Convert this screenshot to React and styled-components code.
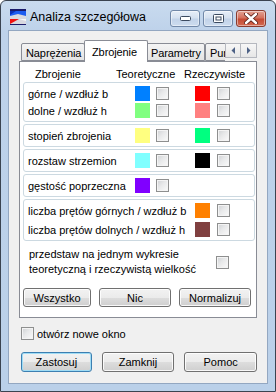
import React from 'react';
import styled, { createGlobalStyle } from 'styled-components';

const GlobalStyle = createGlobalStyle`
  html, body {
    margin: 0;
    padding: 0;
    background: #ffffff;
  }
  body {
    font-family: "Liberation Sans", Arial, sans-serif;
    font-size: 11px;
    color: #000;
  }
  * {
    box-sizing: border-box;
  }
`;

const Window = styled.div`
  width: 276px;
  height: 392px;
  display: flex;
  flex-direction: column;
  background: linear-gradient(#c9dbef 0px, #bed2ea 30px, #bad0e9 100%);
  border: 1px solid #3a4350;
  border-radius: 6px 6px 0 0;
  overflow: hidden;
`;

const TitleBar = styled.div`
  height: 29px;
  flex: 0 0 29px;
  display: flex;
  align-items: center;
  padding: 0 9px 0 9px;
`;

const AppIcon = styled.svg`
  width: 16px;
  height: 16px;
  flex: 0 0 16px;
  margin-top: 2px;
`;

const Title = styled.div`
  margin-left: 4px;
  font-family: "Liberation Sans", Arial, sans-serif;
  font-size: 12.5px;
  color: #000;
  flex: 1;
  padding-top: 2px;
`;

const CaptionButtons = styled.div`
  display: flex;
  gap: 3px;
  align-self: flex-start;
  margin-top: 9px;
`;

const CaptionButton = styled.div`
  width: ${(p) => p.$w}px;
  height: 17px;
  border-radius: 3px;
  display: flex;
  align-items: center;
  justify-content: center;
  border: 1px solid ${(p) => (p.$close ? '#8a3b2e' : '#7188a8')};
  background: ${(p) =>
    p.$close
      ? 'linear-gradient(#e3a394 0%, #d5715e 45%, #c44a33 55%, #d36a52 100%)'
      : 'linear-gradient(#e6eef8 0%, #d5e1f0 45%, #c2d3e9 55%, #cddcef 100%)'};
  box-shadow: inset 0 0 0 1px rgba(255, 255, 255, 0.45);
`;

const Client = styled.div`
  flex: 1;
  margin: 0 7px 8px;
  background: #f0f0f0;
  border: 1px solid #93a7c1;
  padding: 9px 10px 0;
  display: flex;
  flex-direction: column;
`;

const TabStrip = styled.div`
  display: flex;
  align-items: flex-end;
  height: 21px;
  padding-left: 2px;
  position: relative;
  z-index: 1;
`;

const Tab = styled.div`
  flex: 0 0 ${(p) => p.$w}px;
  width: ${(p) => p.$w}px;
  height: ${(p) => (p.$active ? 22 : 18)}px;
  margin: 0 ${(p) => (p.$active ? -2 : 0)}px ${(p) => (p.$active ? -1 : 0)}px ${(p) => (p.$active ? -1 : 0)}px;
  padding: ${(p) => (p.$active ? 0 : 1)}px 0 0 ${(p) => (p.$active ? 7 : 4)}px;
  display: flex;
  align-items: center;
  white-space: nowrap;
  border: 1px solid #898c95;
  border-bottom: ${(p) => (p.$active ? 'none' : '1px solid #898c95')};
  border-radius: 2px 2px 0 0;
  background: ${(p) => (p.$active ? '#ffffff' : 'linear-gradient(#f4f4f4, #e4e4e4)')};
  font-size: 11px;
  letter-spacing: -0.1px;
  position: relative;
  z-index: ${(p) => (p.$active ? 2 : 1)};
`;

const TabClip = styled.div`
  width: 20px;
  overflow: hidden;
  display: flex;
  align-items: flex-end;
`;

const ScrollButtons = styled.div`
  display: flex;
  margin-bottom: 3px;
`;

const ScrollButton = styled.div`
  width: 16px;
  height: 15px;
  display: flex;
  align-items: center;
  justify-content: center;
  border: 1px solid #b5b8bf;
  background: linear-gradient(#f7f7f7, #e6e6e6);
  & + & {
    border-left: none;
  }
`;

const Panel = styled.div`
  height: 257px;
  border: 1px solid #898c95;
  background: #ffffff;
  padding: 0 1px 10px 3px;
  display: flex;
  flex-direction: column;
`;

const HeaderRow = styled.div`
  display: flex;
  height: 20px;
  align-items: center;
  padding: 4px 0 0 12px;
`;

const HeaderCell = styled.div`
  width: ${(p) => p.$w}px;
`;

const Groups = styled.div`
  display: flex;
  flex-direction: column;
  gap: 2px;
`;

const Group = styled.div`
  border: 1px solid #ccd9e1;
  border-radius: 3px;
  padding: 3px 4px;
  display: grid;
  grid-template-columns: 107px 60px 35px;
  row-gap: ${(p) => p.$gap || 2}px;
`;

const Label = styled.div`
  grid-column: ${(p) => (p.$wide ? '1 / 3' : '1')};
  height: 15px;
  display: flex;
  align-items: center;
  white-space: nowrap;
`;

const Pair = styled.div`
  grid-column: ${(p) => p.$col};
  display: flex;
  align-items: center;
  gap: ${(p) => (p.$col === 3 ? 7 : 6)}px;
`;

const Swatch = styled.div`
  width: 15px;
  height: 15px;
  background: ${(p) => p.$color};
  visibility: ${(p) => (p.$color ? 'visible' : 'hidden')};
`;

const Check = styled.div`
  width: 13px;
  height: 13px;
  border: 1px solid #8e8f8f;
  background: linear-gradient(135deg, #cfd1d4 0%, #e8e9ea 45%, #fbfbfb 100%);
  box-shadow: inset 0 0 0 1px #f4f4f4;
  flex: 0 0 13px;
`;

const Combined = styled.div`
  margin-top: 6px;
  padding: 0 4px 0 6px;
  display: grid;
  grid-template-columns: 166px 35px;
  align-items: center;
`;

const MultiLine = styled.div`
  line-height: 15px;
  white-space: nowrap;
`;

const ButtonRow = styled.div`
  margin-top: auto;
  display: flex;
  gap: ${(p) => p.$gap}px;
  padding-left: ${(p) => p.$pl}px;
`;

const Button = styled.div`
  width: ${(p) => p.$w}px;
  height: ${(p) => p.$h || 19}px;
  display: flex;
  align-items: center;
  justify-content: center;
  border: 1px solid ${(p) => (p.$default ? '#3c7fb1' : '#707070')};
  border-radius: 3px;
  background: linear-gradient(#f2f2f2 0%, #ebebeb 50%, #dddddd 51%, #cfcfcf 100%);
  box-shadow: inset 0 0 0 1px ${(p) => (p.$default ? '#9fdcf5' : 'rgba(255,255,255,0.85)')};
`;

const OptionRow = styled.label`
  display: flex;
  align-items: center;
  gap: 3px;
  margin: 9px 0 0 2px;
`;

const BottomRow = styled(ButtonRow)`
  margin: 12px 0 11px;
`;

const rowsTop = [
  ['górne / wzdłuż b', '#0080ff', '#ff0000'],
  ['dolne / wzdłuż h', '#80ff80', '#ff8080'],
];

function Logo() {
  return (
    <AppIcon viewBox="0 0 16 16">
      <rect x="0" y="0" width="16" height="16" fill="#d8d8e0" />
      <rect x="0" y="0" width="16" height="2" fill="#1a1a6a" />
      <polygon points="0,2 16,2 16,7 8,5 0,7" fill="#1d5cf0" />
      <polygon points="0,2 6,2 0,6" fill="#0a2fb8" />
      <polygon points="0,10 9,10 0,15" fill="#f01010" />
      <polygon points="9,10 16,10 16,12" fill="#f8f8f8" />
      <rect x="0" y="15" width="16" height="1" fill="#1a1a6a" />
    </AppIcon>
  );
}

function Arrow({ dir }) {
  return (
    <svg width="5" height="7" viewBox="0 0 5 7">
      {dir === 'left' ? (
        <polygon points="4,0 4,7 0.5,3.5" fill="#4d6185" />
      ) : (
        <polygon points="1,0 1,7 4.5,3.5" fill="#4d6185" />
      )}
    </svg>
  );
}

export default function App() {
  return (
    <>
      <GlobalStyle />
      <Window>
        <TitleBar>
          <Logo />
          <Title>Analiza szczegółowa</Title>
          <CaptionButtons>
            <CaptionButton $w={30}>
              <svg width="11" height="5" viewBox="0 0 11 5">
                <rect x="0.5" y="0.5" width="10" height="4" rx="1" fill="#fff" stroke="#3b4a60" />
              </svg>
            </CaptionButton>
            <CaptionButton $w={30}>
              <svg width="11" height="9" viewBox="0 0 11 9">
                <rect x="0.5" y="0.5" width="10" height="8" rx="1" fill="#fff" stroke="#3b4a60" />
                <rect x="3" y="3" width="5" height="3" fill="none" stroke="#3b4a60" />
              </svg>
            </CaptionButton>
            <CaptionButton $w={30} $close>
              <svg width="14" height="11" viewBox="0 0 14 11">
                <path d="M2 1 L12 10 M12 1 L2 10" stroke="#5a2018" strokeWidth="4.2" strokeLinecap="round" />
                <path d="M2 1 L12 10 M12 1 L2 10" stroke="#ffffff" strokeWidth="2.4" strokeLinecap="round" />
              </svg>
            </CaptionButton>
          </CaptionButtons>
        </TitleBar>

        <Client>
          <TabStrip>
            <Tab $w={64}>Naprężenia</Tab>
            <Tab $w={64} $active>Zbrojenie</Tab>
            <Tab $w={59}>Parametry</Tab>
            <TabClip>
              <Tab $w={50}>Punkty</Tab>
            </TabClip>
            <ScrollButtons>
              <ScrollButton><Arrow dir="left" /></ScrollButton>
              <ScrollButton><Arrow dir="right" /></ScrollButton>
            </ScrollButtons>
          </TabStrip>

          <Panel>
            <HeaderRow>
              <HeaderCell $w={81}>Zbrojenie</HeaderCell>
              <HeaderCell $w={68}>Teoretyczne</HeaderCell>
              <HeaderCell $w={70}>Rzeczywiste</HeaderCell>
            </HeaderRow>

            <Groups>
              <Group>
                {rowsTop.map(([label, teo, rz]) => (
                  <React.Fragment key={label}>
                    <Label>{label}</Label>
                    <Pair $col={2}><Swatch $color={teo} /><Check /></Pair>
                    <Pair $col={3}><Swatch $color={rz} /><Check /></Pair>
                  </React.Fragment>
                ))}
              </Group>
              <Group>
                <Label>stopień zbrojenia</Label>
                <Pair $col={2}><Swatch $color="#ffff80" /><Check /></Pair>
                <Pair $col={3}><Swatch $color="#00ff80" /><Check /></Pair>
              </Group>
              <Group>
                <Label>rozstaw strzemion</Label>
                <Pair $col={2}><Swatch $color="#80ffff" /><Check /></Pair>
                <Pair $col={3}><Swatch $color="#000000" /><Check /></Pair>
              </Group>
              <Group>
                <Label>gęstość poprzeczna</Label>
                <Pair $col={2}><Swatch $color="#8000ff" /><Check /></Pair>
              </Group>
              <Group $gap={4}>
                <Label $wide>liczba prętów górnych / wzdłuż b</Label>
                <Pair $col={3}><Swatch $color="#ff8000" /><Check /></Pair>
                <Label $wide>liczba prętów dolnych / wzdłuż h</Label>
                <Pair $col={3}><Swatch $color="#804040" /><Check /></Pair>
              </Group>
            </Groups>

            <Combined>
              <MultiLine>
                przedstaw na jednym wykresie
                <br />
                teoretyczną i rzeczywistą wielkość
              </MultiLine>
              <Pair $col={2}><Swatch /><Check /></Pair>
            </Combined>

            <ButtonRow $gap={8} $pl={0}>
              <Button $w={68}>Wszystko</Button>
              <Button $w={72}>Nic</Button>
              <Button $w={72}>Normalizuj</Button>
            </ButtonRow>
          </Panel>

          <OptionRow>
            <Check />
            otwórz nowe okno
          </OptionRow>

          <BottomRow $gap={10} $pl={2}>
            <Button $w={71} $h={20} $default>Zastosuj</Button>
            <Button $w={73} $h={20}>Zamknij</Button>
            <Button $w={73} $h={20}>Pomoc</Button>
          </BottomRow>
        </Client>
      </Window>
    </>
  );
}
